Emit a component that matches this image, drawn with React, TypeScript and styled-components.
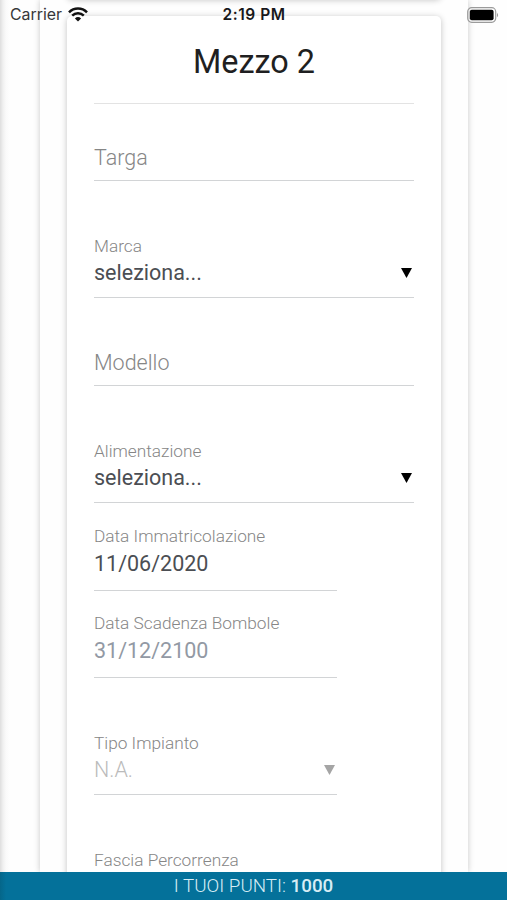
import React from "react";
import styled, { createGlobalStyle } from "styled-components";

const GlobalStyle = createGlobalStyle`
  * { box-sizing: border-box; }
  html, body { margin: 0; background: #fff; overflow: hidden; }
  body { font-family: Roboto, "Liberation Sans", sans-serif; }
`;

const Screen = styled.div`
  position: relative;
  height: 900px;
  display: flex;
  flex-direction: column;
  overflow: hidden;
  background: #fefefe;
`;

const Page = styled.main`
  flex: 1;
  min-height: 0;
  display: flex;
  overflow: hidden;
  padding: 0 39px 0 40px;
  background: linear-gradient(90deg, #dedede 0, #f0f0f0 3px, #fafafa 6px, #fefefe 10px);
`;

const Panel = styled.section`
  flex: 1;
  display: flex;
  flex-direction: column;
  gap: 17px;
  padding: 0 27px;
  background: #fefefe;
  box-shadow: 0 0 6px rgba(0, 0, 0, 0.22);
`;

const Card = styled.article`
  flex: none;
  height: 900px;
  padding: 0 27px;
  border-radius: 5px;
  background: #fff;
  box-shadow: 0 1px 6px rgba(0, 0, 0, 0.24);
`;

const PreviousCard = styled(Card)`
  height: 20px;
  margin-top: -21px;
`;

const Title = styled.h1`
  height: 88px;
  margin: 0;
  padding-top: 26px;
  border-bottom: 1px solid #e3e3e3;
  font-size: 32.4px;
  font-weight: 400;
  line-height: 40px;
  text-align: center;
  color: #1f1f21;
`;

const Field = styled.div<{ $height: number; $narrow?: boolean }>`
  display: flex;
  flex-direction: column;
  justify-content: flex-end;
  width: ${(p) => (p.$narrow ? "243px" : "100%")};
  height: ${(p) => p.$height}px;
  border-bottom: 1px solid #d2d4d6;
`;

const Placeholder = styled.span`
  font-size: 21.5px;
  font-weight: 300;
  line-height: 28px;
  margin-bottom: 8px;
  color: #868686;
`;

const Label = styled.label`
  font-size: 17.25px;
  font-weight: 300;
  line-height: 22px;
  color: #868686;
`;

const Value = styled.div<{ $tone?: string; $light?: boolean; $date?: boolean }>`
  display: flex;
  align-items: center;
  justify-content: space-between;
  height: 28px;
  margin: ${(p) => (p.$date ? "2px 0 13px" : "1px 0 11px")};
  font-size: 21.5px;
  font-weight: ${(p) => (p.$light ? 300 : 400)};
  color: ${(p) => p.$tone ?? "#4b4e53"};
`;

const Arrow = styled.svg`
  position: relative;
  top: 1px;
  width: 11px;
  height: 10px;
  margin-right: 2px;
`;

const EmptyValue = styled.div`
  height: 40px;
`;

const Footer = styled.footer`
  height: 28.5px;
  flex: none;
  background: linear-gradient(90deg, #056689 0, #04719a 6px);
  color: #d7edf5;
  font-size: 18.8px;
  font-weight: 300;
  line-height: 28px;
  text-align: center;
  b { font-weight: 500; }
`;

const StatusBar = styled.header`
  position: absolute;
  inset: 0 0 auto;
  height: 29px;
  display: grid;
  grid-template-columns: 1fr auto 1fr;
  align-items: center;
  padding: 0 8px 0 10px;
  font-family: Inter, "Liberation Sans", sans-serif;
  color: #18181a;
`;

const Carrier = styled.div`
  display: flex;
  align-items: center;
  gap: 6px;
  font-size: 15.9px;
  color: #38383a;
`;

const Clock = styled.time`
  font-size: 15.5px;
  font-weight: 600;
  letter-spacing: 0.55px;
  padding-right: 1px;
`;

const Battery = styled.svg`
  justify-self: end;
`;

const Down = ({ color = "#000" }: { color?: string }) => (
  <Arrow viewBox="0 0 11 10"><path d="M0 0H11L5.5 10Z" fill={color} /></Arrow>
);

type SelectProps = { label: string; value?: string; disabled?: boolean };

const SelectField = ({ label, value, disabled }: SelectProps) => (
  <Field $height={117} $narrow={disabled}>
    <Label>{label}</Label>
    {value ? (
      <Value $light={disabled} $tone={disabled ? "#bbb" : undefined}>
        {value}
        <Down color={disabled ? "#a5a5a5" : undefined} />
      </Value>
    ) : (
      <EmptyValue />
    )}
  </Field>
);

type DateProps = { label: string; value: string; tone?: string; height?: number };

const DateField = ({ label, value, tone, height = 88 }: DateProps) => (
  <Field $height={height} $narrow>
    <Label>{label}</Label>
    <Value $tone={tone} $date>{value}</Value>
  </Field>
);

export default function App() {
  return (
    <>
      <GlobalStyle />
      <Screen>
        <Page>
          <Panel>
            <PreviousCard />
            <Card>
              <Title>Mezzo 2</Title>
              <Field $height={77}><Placeholder>Targa</Placeholder></Field>
              <SelectField label="Marca" value="seleziona..." />
              <Field $height={88}><Placeholder>Modello</Placeholder></Field>
              <SelectField label="Alimentazione" value="seleziona..." />
              <DateField label="Data Immatricolazione" value="11/06/2020" />
              <DateField label="Data Scadenza Bombole" value="31/12/2100" tone="#9299a4" height={87} />
              <SelectField label="Tipo Impianto" value="N.A." disabled />
              <SelectField label="Fascia Percorrenza" disabled />
            </Card>
          </Panel>
        </Page>
        <Footer>I TUOI PUNTI: <b>1000</b></Footer>
        <StatusBar>
          <Carrier>
            Carrier
            <svg width="20" height="15" viewBox="0 0 20 15" fill="none" stroke="#111" strokeWidth="2.5">
              <path d="M1 5.3C6 .2 14 .2 19 5.3M4.2 8.7C7.4 5.5 12.6 5.5 15.8 8.7" />
              <path d="M6.9 11.4Q10 8.5 13.1 11.4L10 14.5Z" fill="#111" stroke="none" />
            </svg>
          </Carrier>
          <Clock>2:19 PM</Clock>
          <Battery width="32" height="16" viewBox="0 0 32 16">
            <rect x=".7" y=".7" width="28" height="14.6" rx="4" fill="none" stroke="#9b9b9b" strokeWidth="1.2" />
            <rect x="2.8" y="2.8" width="23.8" height="10.4" rx="2" />
            <path d="M30 5.7Q32.2 8 30 10.3Z" fill="#999" />
          </Battery>
        </StatusBar>
      </Screen>
    </>
  );
}
